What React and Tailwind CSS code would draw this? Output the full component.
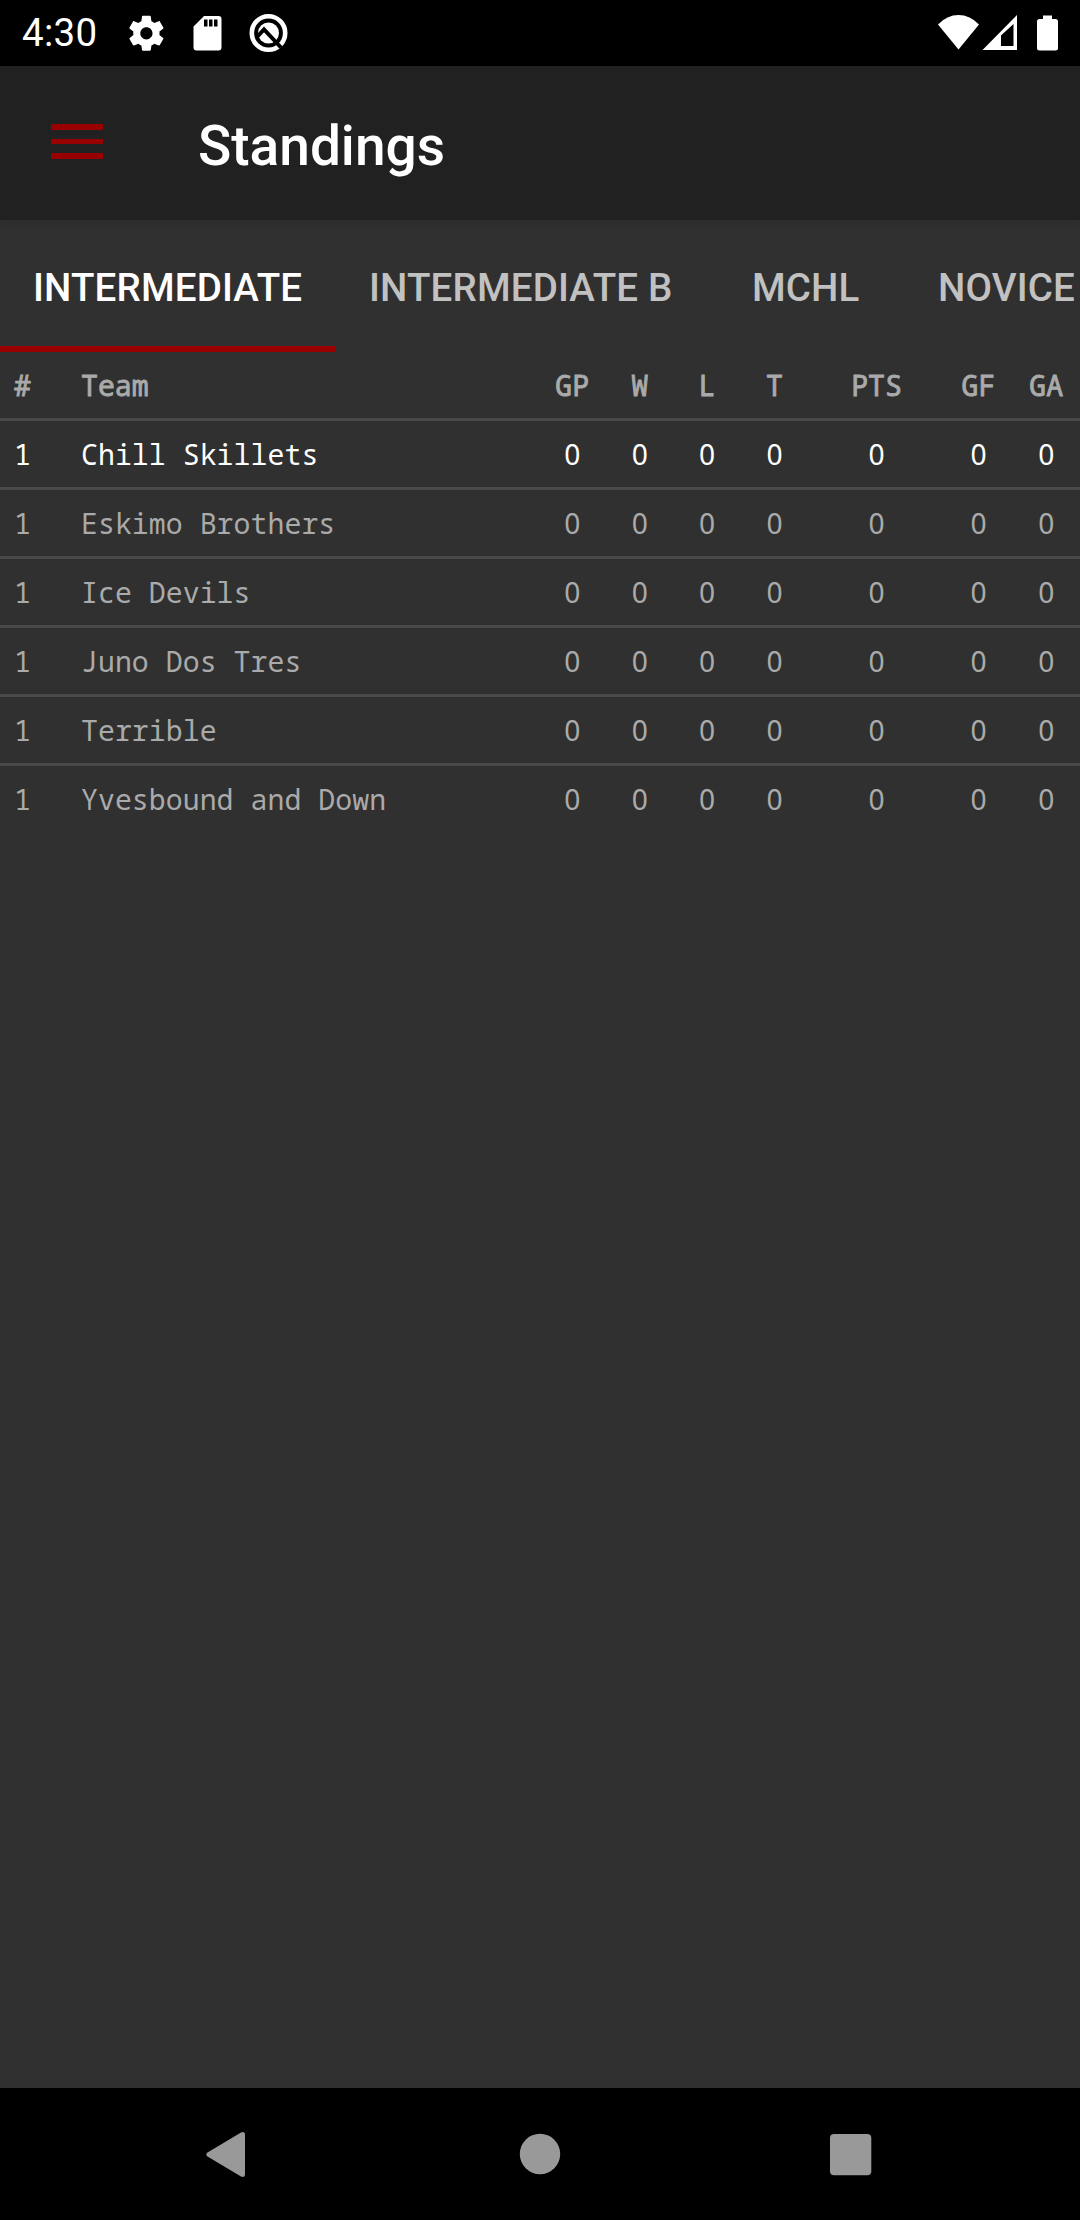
const tabs = [
  { label: "INTERMEDIATE", cls: "w-[336px] text-white", pad: "pl-[33px]" },
  { label: "INTERMEDIATE B", cls: "w-[369px] text-[#c1c1c1]", pad: "pl-[33px]" },
  { label: "MCHL", cls: "w-[200px] text-[#c1c1c1]", pad: "pl-[47px]" },
  { label: "NOVICE", cls: "w-[204px] text-[#c1c1c1]", pad: "pl-[33px]" },
];

const teams = [
  "Chill Skillets",
  "Eskimo Brothers",
  "Ice Devils",
  "Juno Dos Tres",
  "Terrible",
  "Yvesbound and Down",
];

const columns = ["GP", "W", "L", "T", "PTS", "GF", "GA"];

const rowGrid =
  "grid h-[66px] grid-cols-[67px_471.5px_67.5px_67.5px_67px_68px_136px_68px_67.5px] items-center text-[28.2px] leading-[66px]";

function StatusBar() {
  return (
    <header className="flex h-[66px] shrink-0 items-center bg-black text-white">
      <span className="ml-[22px] w-[104px] text-[38.5px] leading-[66px] tracking-[0.3px] whitespace-nowrap">4:30</span>
      <svg className="h-[66px] w-[180px]" viewBox="126 0 180 66" fill="currentColor">
        <g transform="translate(125.4 12.3) scale(1.75)">
          <path d="M19.43 12.98c.04-.32.07-.64.07-.98s-.03-.66-.07-.98l2.11-1.65c.19-.15.24-.42.12-.64l-2-3.46c-.12-.22-.39-.3-.61-.22l-2.49 1c-.52-.4-1.08-.73-1.69-.98l-.38-2.65C14.46 2.18 14.25 2 14 2h-4c-.25 0-.46.18-.49.42l-.38 2.65c-.61.25-1.17.59-1.69.98l-2.49-1c-.23-.09-.49 0-.61.22l-2 3.46c-.13.22-.07.49.12.64l2.11 1.65c-.04.32-.07.65-.07.98s.03.66.07.98l-2.11 1.65c-.19.15-.24.42-.12.64l2 3.46c.12.22.39.3.61.22l2.49-1c.52.4 1.08.73 1.69.98l.38 2.65c.03.24.24.42.49.42h4c.25 0 .46-.18.49-.42l.38-2.65c.61-.25 1.17-.59 1.69-.98l2.49 1c.23.09.49 0 .61-.22l2-3.46c.12-.22.07-.49-.12-.64l-2.11-1.65zM12 15.5c-1.93 0-3.5-1.57-3.5-3.5s1.57-3.5 3.5-3.5 3.5 1.57 3.5 3.5-1.57 3.5-3.5 3.5z" />
        </g>
        <path fillRule="evenodd" d="M204 16h14.500a3 3 0 0 1 3 3v28.500a3 3 0 0 1-3 3H196.500a3 3 0 0 1-3-3V26.500zM204 19.500v7h3.500v-7zM209 19.500v7h3.500v-7zM214 19.500v7h3.500v-7z" />
        <circle cx="268.500" cy="33" r="16.700" fill="none" stroke="currentColor" strokeWidth="4.600" />
        <circle cx="268.500" cy="33" r="10.500" />
        <path d="M257 37l7-7.500 17 18" fill="none" stroke="#000" strokeWidth="4" />
      </svg>
      <svg className="ml-auto h-[66px] w-[160px]" viewBox="920 0 160 66" fill="currentColor">
        <path d="M958.500 49.500L938 24.500Q947 15 958.500 15T979 24.500z" />
        <path fillRule="evenodd" d="M982.500 50L1017 15v35zM1001 35.500v10.500h12.500V24z" />
        <path d="M1043 15.500h9V19h3.500a2.500 2.500 0 0 1 2.500 2.500V48a2.500 2.500 0 0 1-2.500 2.500h-16a2.500 2.500 0 0 1-2.500-2.500V21.500a2.500 2.500 0 0 1 2.500-2.500h3.500z" />
      </svg>
    </header>
  );
}

function AppBar() {
  return (
    <div className="z-10 flex h-[154px] shrink-0 items-center bg-[#212121] shadow-[0_1px_10px_rgba(0,0,0,0.12)]">
      <button className="mb-[3px] ml-[51px] flex w-[52px] flex-col gap-[9px] text-[#990000]" aria-label="Menu">
        <span className="h-[5.5px] w-full rounded-[1px] bg-current" />
        <span className="h-[5.5px] w-full rounded-[1px] bg-current" />
        <span className="h-[5.5px] w-full rounded-[1px] bg-current" />
      </button>
      <h1 className="mt-[6px] ml-[95px] text-[55px] leading-[64px] font-medium text-white">Standings</h1>
    </div>
  );
}

function Tabs() {
  return (
    <nav className="flex h-[132px] shrink-0 overflow-hidden text-[38.5px] font-medium tracking-[0.16px] whitespace-nowrap">
      {tabs.map((tab, i) => (
        <div key={tab.label} className={"flex shrink-0 flex-col justify-end " + tab.cls}>
          <span className={"flex h-[126px] items-center " + tab.pad}>
            <span className="mt-[10px]">{tab.label}</span>
          </span>
          <span className={i === 0 ? "h-[6px] bg-[#990000]" : "h-[6px]"} />
        </div>
      ))}
    </nav>
  );
}

function Standings() {
  return (
    <section className="flex-1 font-['Noto_Sans_Mono','DejaVu_Sans_Mono',monospace] text-[#aaaaaa]">
      <div className={rowGrid + " [-webkit-text-stroke:0.9px_#aaaaaa]"}>
        <span className="pl-[14px]">#</span>
        <span className="pl-[14px]">Team</span>
        {columns.map((c) => (
          <span key={c} className="text-center">{c}</span>
        ))}
      </div>
      {teams.map((team, i) => (
        <div key={team} className={i === 0 ? "border-t-[3px] border-[#494949] text-white" : "border-t-[3px] border-[#494949]"}>
          <div className={rowGrid}>
            <span className="pl-[14px]">1</span>
            <span className="pl-[14px] tracking-[0.04px]">{team}</span>
            {columns.map((c) => (
              <span key={c} className="text-center font-['Noto_Sans',sans-serif]">0</span>
            ))}
          </div>
        </div>
      ))}
    </section>
  );
}

function NavigationBar() {
  return (
    <footer className="h-[132px] shrink-0 bg-black">
      <svg className="h-[132px] w-[1080px]" viewBox="0 2088 1080 132" fill="#999999">
        <path d="M207.500 2152.500L241 2132.500Q245 2131 245 2135V2174Q245 2178 241 2176.500L207.500 2156.500Q205 2154.500 207.500 2152.500z" />
        <circle cx="540" cy="2154" r="20.200" />
        <rect x="830" y="2134" width="41.300" height="41.300" rx="4" />
      </svg>
    </footer>
  );
}

export default function App() {
  return (
    <div className="flex h-[2220px] w-[1080px] flex-col overflow-hidden bg-[#303030] font-[Roboto,sans-serif]">
      <StatusBar />
      <AppBar />
      <Tabs />
      <Standings />
      <NavigationBar />
    </div>
  );
}
